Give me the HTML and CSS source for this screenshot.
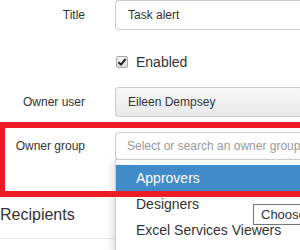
FILE: index.html
```html
<!DOCTYPE html>
<html lang="en">
<head>
    <meta charset="UTF-8">
    <title>Task alert</title>
    <link rel="stylesheet" href="styles.css">
</head>
<body>
    <!-- Formulario de alerta -->
    <div class="form">
        <div class="row">
            <label class="label">Title</label>
            <div class="input">Task alert</div>
        </div>

        <div class="row row-check">
            <span></span>
            <label class="check">
                <span class="box">
                    <svg width="10" height="10" viewBox="0 0 10 10"><path d="M1.5 5.2 L4 7.6 L8.6 2" fill="none" stroke="#222" stroke-width="2"/></svg>
                </span>
                Enabled
            </label>
        </div>

        <div class="row row-user">
            <label class="label">Owner user</label>
            <div class="input select">Eileen Dempsey</div>
        </div>

        <div class="row row-group">
            <label class="label">Owner group</label>
            <div class="combo">
                <div class="input search">Select or search an owner group</div>
                <!-- Lista desplegable de grupos -->
                <ul class="dropdown">
                    <li class="active">Approvers</li>
                    <li>Designers</li>
                    <li>Excel Services Viewers</li>
                </ul>
            </div>
        </div>
    </div>

    <h3 class="section">Recipients</h3>

    <div class="highlight"></div>
    <div class="tip">Choose</div>
</body>
</html>
```

FILE: styles.css
```css
/* Estilo general */
body {
    margin: 0;
    width: 300px;
    height: 250px;
    overflow: hidden;
    position: relative;
    background: #fff;
    font-family: "Liberation Sans", Arial, sans-serif;
    color: #333;
}

.form {
    width: 300px;
}

.row {
    display: grid;
    grid-template-columns: 115px 185px;
    align-items: center;
    height: 30px;
}

.label {
    font-size: 12px;
    text-align: right;
    padding-right: 30px;
}

/* Los campos siguen más allá del borde derecho */
.input {
    box-sizing: border-box;
    height: 30px;
    border: 1px solid #ccc;
    border-right: none;
    border-radius: 4px 0 0 4px;
    padding-left: 12px;
    font-size: 12px;
    line-height: 28px;
    color: #333;
    white-space: nowrap;
    overflow: hidden;
}

.row-check {
    height: 20px;
    margin-top: 22px;
}

.check {
    display: flex;
    align-items: center;
    font-size: 14px;
}

.box {
    box-sizing: border-box;
    width: 12px;
    height: 12px;
    margin-left: 1px;
    margin-right: 8px;
    border: 1px solid #a6a6a6;
    border-radius: 2px;
    background: linear-gradient(#f4f4f4, #dcdcdc);
    display: flex;
    align-items: center;
    justify-content: center;
}

.row-user {
    margin-top: 15px;
}

.select {
    background: linear-gradient(#f8f8f8, #e9e9e9);
}

.row-group {
    margin-top: 15px;
    height: 28px;
}

.combo {
    position: relative;
}

.search {
    height: 28px;
    line-height: 26px;
    color: #999;
    padding-left: 11px;
}

.dropdown {
    position: absolute;
    top: 27px;
    left: 0;
    right: 0;
    height: 85px;
    margin: 0;
    padding: 5px 0 0;
    list-style: none;
    background: #fff;
    border: 1px solid #ccc;
    border-right: none;
    border-bottom: none;
    box-shadow: -2px 4px 8px rgba(0, 0, 0, 0.15);
    z-index: 2;
}

.dropdown li {
    height: 26px;
    line-height: 26px;
    padding-left: 20px;
    font-size: 14px;
    color: #333;
    white-space: nowrap;
}

.dropdown li.active {
    background: #428bca;
    color: #fff;
}

.section {
    margin: 45px 0 0;
    padding-bottom: 13px;
    font-size: 16px;
    font-weight: normal;
    line-height: 20px;
    border-bottom: 1px solid #eaeaea;
}

/* Marco rojo de la captura */
.highlight {
    position: absolute;
    left: 0;
    right: 0;
    top: 122px;
    height: 75px;
    box-sizing: border-box;
    border: 6px solid #ed1c24;
    border-left-width: 5px;
    border-right: none;
    z-index: 3;
}

.tip {
    position: absolute;
    left: 253px;
    right: 0;
    top: 204px;
    height: 19px;
    padding-left: 7px;
    border: 1px solid #767676;
    border-right: none;
    background: #fff;
    font-size: 13px;
    line-height: 19px;
    color: #333;
    white-space: nowrap;
    overflow: hidden;
    z-index: 4;
}
```
